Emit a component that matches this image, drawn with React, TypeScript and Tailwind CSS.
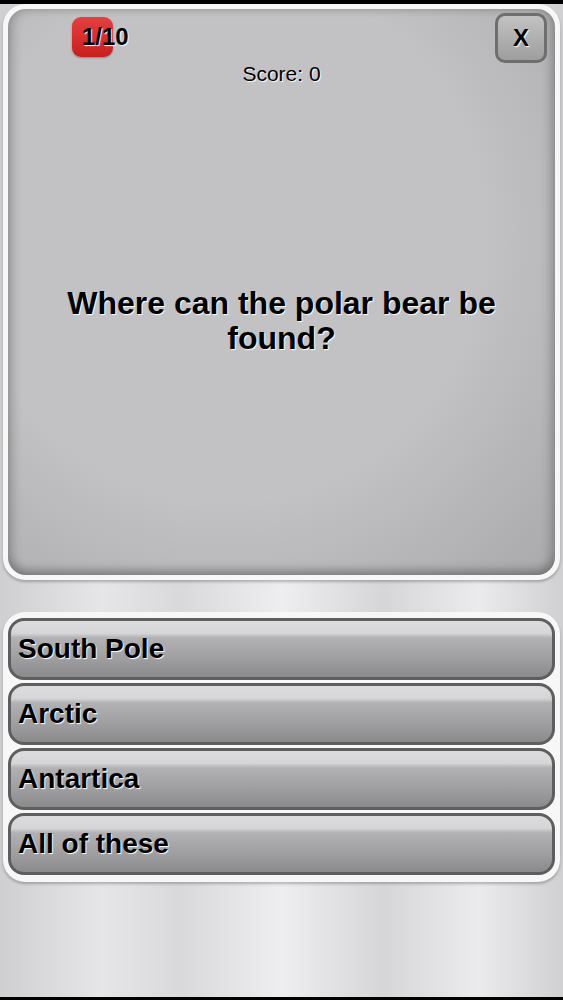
const answers = ["South Pole", "Arctic", "Antartica", "All of these"];

const font = { fontFamily: '"Liberation Sans", Arial, sans-serif' };

export default function App() {
  return (
    <div className="flex h-[1000px] w-full flex-col bg-black" style={font}>
      <div className="h-[4px]" />
      <div className="relative flex flex-1 flex-col bg-[linear-gradient(90deg,#cfcfd1_0%,#e6e6e8_18%,#d9d9db_32%,#eeeef0_50%,#d6d6d8_68%,#ebebed_85%,#d0d0d2_100%)] px-[3px]">
        {/* question panel */}
        <div className="h-[576px] rounded-[22px] bg-[#f7f7f7] p-[5px] shadow-[0_2px_3px_rgba(0,0,0,0.25)]">
          <div className="relative h-full rounded-[18px] bg-[radial-gradient(ellipse_at_40%_40%,#c2c1c3_55%,#a9a8aa_100%)] shadow-[inset_0_-6px_10px_rgba(0,0,0,0.2),inset_-6px_0_10px_rgba(0,0,0,0.12),inset_6px_0_10px_rgba(0,0,0,0.12)]">
            <div className="absolute left-[64px] top-[8px] h-[40px] w-[41px] rounded-[9px] bg-[linear-gradient(180deg,#e34040,#c91e1e)] shadow-[0_1px_2px_rgba(0,0,0,0.3)]" />
            <div className="absolute left-[74px] top-[14px] text-[24px] font-bold leading-[28px] text-black [text-shadow:1px_1px_1px_#fff]">
              1/10
            </div>
            <button className="absolute right-[8px] top-[4px] flex h-[50px] w-[52px] items-center justify-center rounded-[10px] border-[3px] border-[#6e6e6e] bg-[linear-gradient(180deg,#c2c2c2,#9e9e9e)] text-[24px] font-bold text-black [text-shadow:1px_1px_1px_#fff]">
              X
            </button>
            <div className="pt-[53px] text-center text-[21px] leading-[24px] text-black [text-shadow:1px_1px_1px_#fff]">
              Score: 0
            </div>
            <div className="mt-[200px] px-[30px] text-center text-[32px] font-bold leading-[35px] text-black [text-shadow:1px_1px_1px_#fff]">
              Where can the polar bear be found?
            </div>
          </div>
        </div>

        {/* answers */}
        <div className="mt-[32px] flex flex-col gap-[3px] rounded-[22px] bg-[#f7f7f7] px-[5px] pb-[7px] pt-[6px] shadow-[0_2px_3px_rgba(0,0,0,0.25)]">
          {answers.map((a) => (
            <button
              key={a}
              className="flex h-[62px] items-center rounded-[16px] border-[3px] border-[#5e5e5e] bg-[linear-gradient(180deg,#dcdbdd_0%,#d6d5d7_22%,#b2b1b3_30%,#9d9c9e_70%,#8a898b_100%)] pl-[7px] text-left text-[28px] font-bold text-black [text-shadow:1px_1px_1px_#fff]"
            >
              {a}
            </button>
          ))}
        </div>
        <div className="flex-1" />
      </div>
      <div className="h-[3px]" />
    </div>
  );
}
